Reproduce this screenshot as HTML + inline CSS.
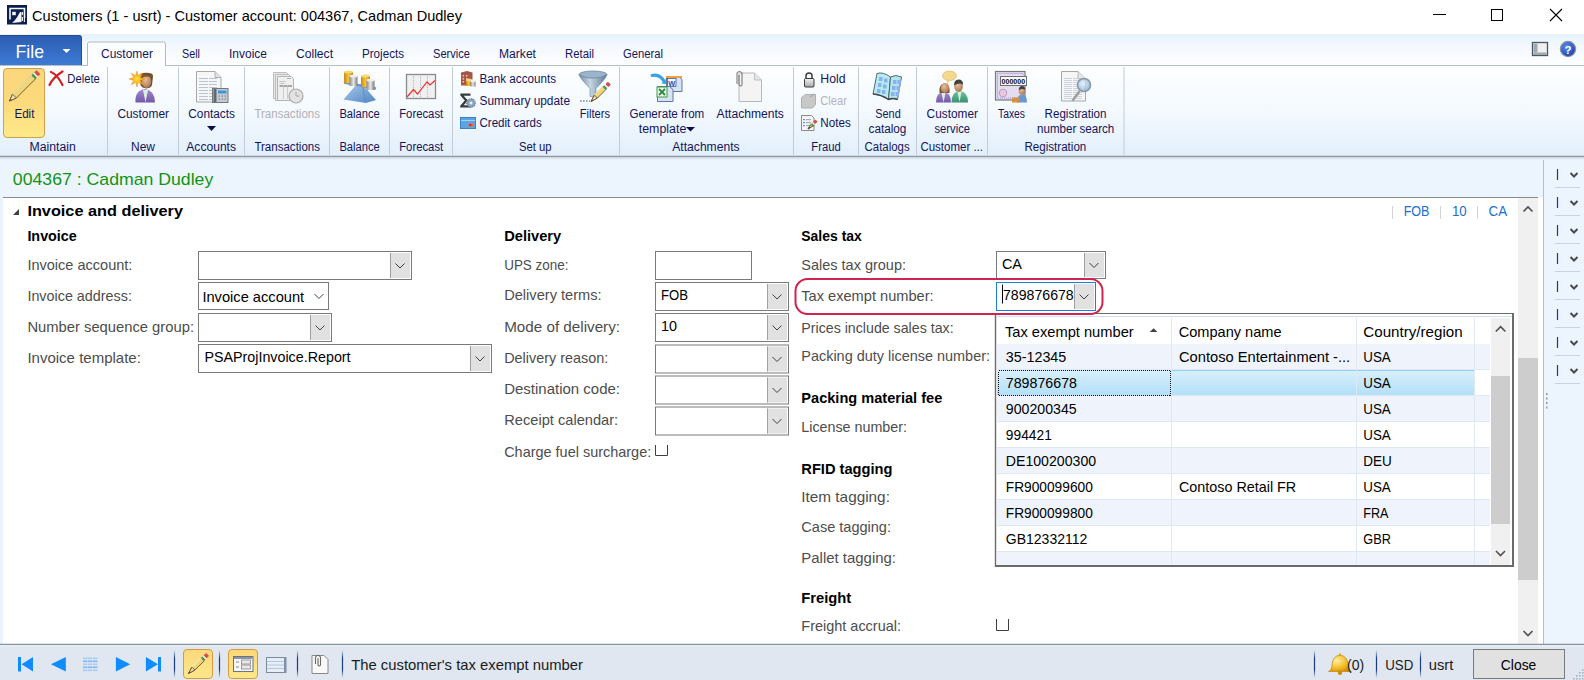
<!DOCTYPE html>
<html><head><meta charset="utf-8"><title>Customers</title>
<style>html,body{margin:0;padding:0;width:1584px;height:680px;overflow:hidden;background:#fff}
svg{display:block} text{font-family:"Liberation Sans",sans-serif}</style></head>
<body><svg width="1584" height="680" viewBox="0 0 1584 680">
<defs>
<linearGradient id="gRib" x1="0" y1="0" x2="0" y2="1">
 <stop offset="0" stop-color="#fdfeff"/><stop offset="0.5" stop-color="#f3f9fe"/><stop offset="1" stop-color="#e2effb"/>
</linearGradient>
<linearGradient id="gTabs" x1="0" y1="0" x2="0" y2="1">
 <stop offset="0" stop-color="#e7f2fc"/><stop offset="0.55" stop-color="#f7fbfe"/><stop offset="1" stop-color="#fcfdff"/>
</linearGradient>
<linearGradient id="gFile" x1="0" y1="0" x2="0" y2="1">
 <stop offset="0" stop-color="#2b5cae"/><stop offset="1" stop-color="#3d7bd6"/>
</linearGradient>
<linearGradient id="gEdit" x1="0" y1="0" x2="0" y2="1">
 <stop offset="0" stop-color="#fbd67e"/><stop offset="0.45" stop-color="#fcd97a"/><stop offset="1" stop-color="#fee98a"/>
</linearGradient>
<linearGradient id="gSel" x1="0" y1="0" x2="0" y2="1">
 <stop offset="0" stop-color="#d9effb"/><stop offset="1" stop-color="#b1dff8"/>
</linearGradient>
<linearGradient id="gBtnY" x1="0" y1="0" x2="0" y2="1">
 <stop offset="0" stop-color="#fcd87c"/><stop offset="1" stop-color="#fee78b"/>
</linearGradient>
<linearGradient id="gGold" x1="0" y1="0" x2="1" y2="0">
 <stop offset="0" stop-color="#c88a10"/><stop offset="0.5" stop-color="#f5c542"/><stop offset="1" stop-color="#b87a08"/>
</linearGradient>
<linearGradient id="gSilver" x1="0" y1="0" x2="1" y2="0">
 <stop offset="0" stop-color="#8a8a8a"/><stop offset="0.5" stop-color="#e6e6e6"/><stop offset="1" stop-color="#7a7a7a"/>
</linearGradient>
<linearGradient id="gBlueTri" x1="0" y1="0" x2="1" y2="1">
 <stop offset="0" stop-color="#a9c8ea"/><stop offset="1" stop-color="#4f86c4"/>
</linearGradient>
<linearGradient id="gFunnel" x1="0" y1="0" x2="1" y2="0">
 <stop offset="0" stop-color="#6f8ba6"/><stop offset="0.4" stop-color="#c8d6e4"/><stop offset="1" stop-color="#5a7894"/>
</linearGradient>
<linearGradient id="gLock" x1="0" y1="0" x2="0" y2="1">
 <stop offset="0" stop-color="#f4f4f4"/><stop offset="1" stop-color="#a8a8a8"/>
</linearGradient>
<linearGradient id="gPurple" x1="0" y1="0" x2="0" y2="1">
 <stop offset="0" stop-color="#a58ad0"/><stop offset="1" stop-color="#7258a8"/>
</linearGradient>
<linearGradient id="gGreenP" x1="0" y1="0" x2="0" y2="1">
 <stop offset="0" stop-color="#6fc4a0"/><stop offset="1" stop-color="#3a9070"/>
</linearGradient>
<radialGradient id="gFace" cx="0.4" cy="0.35" r="0.7">
 <stop offset="0" stop-color="#e8c09a"/><stop offset="1" stop-color="#a87450"/>
</radialGradient>
<radialGradient id="gStar" cx="0.5" cy="0.5" r="0.5">
 <stop offset="0" stop-color="#ffe040"/><stop offset="1" stop-color="#f09010"/>
</radialGradient>
<radialGradient id="gBell" cx="0.35" cy="0.35" r="0.8">
 <stop offset="0" stop-color="#fff0a0"/><stop offset="0.6" stop-color="#f2b820"/><stop offset="1" stop-color="#c07a08"/>
</radialGradient>
<radialGradient id="gHelp" cx="0.4" cy="0.35" r="0.7">
 <stop offset="0" stop-color="#5a8ef0"/><stop offset="1" stop-color="#1a3ea8"/>
</radialGradient>
<radialGradient id="gLens" cx="0.4" cy="0.4" r="0.6">
 <stop offset="0" stop-color="#e8f2fb"/><stop offset="1" stop-color="#8fb4d8"/>
</radialGradient>
<linearGradient id="gSep" x1="0" y1="0" x2="0" y2="1">
 <stop offset="0" stop-color="#1a3a7a" stop-opacity="0"/><stop offset="0.3" stop-color="#1a3a7a"/><stop offset="0.7" stop-color="#1a3a7a"/><stop offset="1" stop-color="#1a3a7a" stop-opacity="0"/>
</linearGradient>
<linearGradient id="gShadow" x1="0" y1="0" x2="0" y2="1">
 <stop offset="0" stop-color="#c9ced4"/><stop offset="1" stop-color="#ecf5fd" stop-opacity="0"/>
</linearGradient>
</defs>

<rect x="0" y="0" width="1584" height="34" fill="#ffffff" />
<rect x="7" y="5" width="20" height="19.5" fill="#0a1e50" />
<path d="M10 19.5V8.5h14.5V18" fill="none" stroke="#f4f6fa" stroke-width="1.6"/>
<rect x="12.2" y="11.8" width="3.6" height="3.4" fill="#f4f6fa" />
<path d="M11.5 17.5h2M12 23q4-3 8-11l1.5 0v10z" fill="#f4f6fa"/>
<path d="M22.4 12v3M22.4 17v4M24.4 18v4" stroke="#f4f6fa" stroke-width="1.1"/>
<text x="32" y="20.6" font-size="15" fill="#000" textLength="430" lengthAdjust="spacingAndGlyphs" >Customers (1 - usrt) - Customer account: 004367, Cadman Dudley</text>
<line x1="1433" y1="14.5" x2="1446" y2="14.5" stroke="#000" stroke-width="1" />
<rect x="1491.5" y="9.5" width="11" height="11" fill="none" stroke="#000" stroke-width="1" />
<path d="M1550 9L1562 21M1562 9L1550 21" stroke="#000" stroke-width="1.1"/>
<rect x="0" y="34" width="1584" height="31" fill="url(#gTabs)" />
<line x1="0" y1="65.5" x2="1584" y2="65.5" stroke="#b6bec8" stroke-width="1" />
<path d="M0 35h79a3 3 0 0 1 3 3v27h-82z" fill="url(#gFile)"/>
<path d="M0 35.5h78.5a3 3 0 0 1 3 3v26.5" fill="none" stroke="#2a4c8c" stroke-width="1"/>
<text x="15.5" y="58.2" font-size="19" fill="#ffffff" textLength="28.5" lengthAdjust="spacingAndGlyphs" >File</text>
<path d="M62.5 49h8l-4 4z" fill="#fff"/>
<path d="M87.5 66V44a2 2 0 0 1 2-2h74a2 2 0 0 1 2 2v22" fill="#fbfdff" stroke="#b0b9c4" stroke-width="1"/>
<rect x="88" y="64" width="77" height="4" fill="#fbfdff" />
<text x="101" y="58.0" font-size="12" fill="#14145a" textLength="52" lengthAdjust="spacingAndGlyphs" >Customer</text>
<text x="182" y="58.0" font-size="12" fill="#14145a" textLength="18" lengthAdjust="spacingAndGlyphs" >Sell</text>
<text x="229" y="58.0" font-size="12" fill="#14145a" textLength="38" lengthAdjust="spacingAndGlyphs" >Invoice</text>
<text x="296" y="58.0" font-size="12" fill="#14145a" textLength="37" lengthAdjust="spacingAndGlyphs" >Collect</text>
<text x="362" y="58.0" font-size="12" fill="#14145a" textLength="42" lengthAdjust="spacingAndGlyphs" >Projects</text>
<text x="433" y="58.0" font-size="12" fill="#14145a" textLength="37" lengthAdjust="spacingAndGlyphs" >Service</text>
<text x="499" y="58.0" font-size="12" fill="#14145a" textLength="37" lengthAdjust="spacingAndGlyphs" >Market</text>
<text x="565" y="58.0" font-size="12" fill="#14145a" textLength="29" lengthAdjust="spacingAndGlyphs" >Retail</text>
<text x="623" y="58.0" font-size="12" fill="#14145a" textLength="40" lengthAdjust="spacingAndGlyphs" >General</text>
<rect x="1532.5" y="42.5" width="15" height="13" fill="#efefef" stroke="#4a5660" stroke-width="1.3" />
<path d="M1533.5 43.5h4v9h-4z" fill="#a0a8b0"/><path d="M1533.5 52.5h13v2.5h-13z" fill="#a0a8b0"/>
<circle cx="1568" cy="49" r="7.6" fill="url(#gHelp)" stroke="#8a96a6" stroke-width="1.3"/>
<text x="1564.6" y="53.6" font-size="11.5" fill="#fff" font-weight="bold" textLength="7" lengthAdjust="spacingAndGlyphs" >?</text>
<rect x="0" y="66" width="1584" height="90" fill="url(#gRib)" />
<line x1="0" y1="156.5" x2="1584" y2="156.5" stroke="#8e9aa6" stroke-width="1.6" />
<line x1="107.5" y1="67" x2="107.5" y2="155" stroke="#c2cbd6" stroke-width="1"/>
<line x1="178.5" y1="67" x2="178.5" y2="155" stroke="#c2cbd6" stroke-width="1"/>
<line x1="244.5" y1="67" x2="244.5" y2="155" stroke="#c2cbd6" stroke-width="1"/>
<line x1="329.5" y1="67" x2="329.5" y2="155" stroke="#c2cbd6" stroke-width="1"/>
<line x1="389.5" y1="67" x2="389.5" y2="155" stroke="#c2cbd6" stroke-width="1"/>
<line x1="452.5" y1="67" x2="452.5" y2="155" stroke="#c2cbd6" stroke-width="1"/>
<line x1="619.5" y1="67" x2="619.5" y2="155" stroke="#c2cbd6" stroke-width="1"/>
<line x1="793.5" y1="67" x2="793.5" y2="155" stroke="#c2cbd6" stroke-width="1"/>
<line x1="858.5" y1="67" x2="858.5" y2="155" stroke="#c2cbd6" stroke-width="1"/>
<line x1="916.5" y1="67" x2="916.5" y2="155" stroke="#c2cbd6" stroke-width="1"/>
<line x1="987.5" y1="67" x2="987.5" y2="155" stroke="#c2cbd6" stroke-width="1"/>
<line x1="1124" y1="67" x2="1124" y2="155" stroke="#c2cbd6" stroke-width="1"/>
<rect x="3.5" y="68.5" width="41" height="69" fill="url(#gEdit)" stroke="#d2a24a" stroke-width="1" rx="3.5" />
<g transform="translate(9.5,101) rotate(-45)"><path d="M0 0L7 -2.75H34V2.75H7z" fill="#f1d475" stroke="#6a5a30" stroke-width="0.9"/><path d="M0 0L7 -2.75V2.75z" fill="#f4dcb8" stroke="#6a5a30" stroke-width="0.9"/><path d="M0 0l2.2 -0.7v1.4z" fill="#404040"/><rect x="34" y="-2.75" width="2" height="5.5" fill="#3a9a50"/><rect x="36" y="-2.75" width="1.5" height="5.5" fill="#f0f0f0"/><rect x="37.5" y="-2.75" width="3.5" height="5.5" fill="#d05050" rx="0.8"/><path d="M7 -2.75H34" stroke="#fff6c0" stroke-width="1"/></g>
<text x="14.4" y="117.8" font-size="12" fill="#14145a" textLength="20" lengthAdjust="spacingAndGlyphs" >Edit</text>
<path d="M49.5 85q3-7 13-13.5M51 72q6 2 11.5 13" fill="none" stroke="#d42020" stroke-width="2.2" stroke-linecap="round"/>
<text x="67.3" y="83" font-size="12" fill="#14145a" textLength="32.5" lengthAdjust="spacingAndGlyphs" >Delete</text>
<text x="29.5" y="150.6" font-size="12" fill="#14145a" textLength="46.3" lengthAdjust="spacingAndGlyphs" >Maintain</text>
<path d="M135.5 102.5q-1-12 9.5-13.5q10 1.5 10 13.5z" fill="url(#gPurple)"/>
<path d="M143 90l2.5 12.5 2.5-12.5z" fill="#d8f0dc"/>
<path d="M139 76q0-3 7-3.3q7 0 7 3.3l-1 9q-1 3-5.5 3.5q-4.5-0.5-6-3.5z" fill="#6a4a28"/>
<ellipse cx="146.5" cy="81.5" rx="4.8" ry="6.5" fill="url(#gFace)"/>
<path d="M141 75q5-3 11.5 0.5v2q-6-2-11.5 0z" fill="#7a5630"/>
<path d="M137.00 71.00 L138.38 75.67 L142.66 73.34 L140.33 77.62 L145.00 79.00 L140.33 80.38 L142.66 84.66 L138.38 82.33 L137.00 87.00 L135.62 82.33 L131.34 84.66 L133.67 80.38 L129.00 79.00 L133.67 77.62 L131.34 73.34 L135.62 75.67z" fill="url(#gStar)" stroke="#e89a18" stroke-width="0.5"/>
<text x="117.4" y="117.8" font-size="12" fill="#14145a" textLength="51.6" lengthAdjust="spacingAndGlyphs" >Customer</text>
<text x="131" y="150.6" font-size="12" fill="#14145a" textLength="24" lengthAdjust="spacingAndGlyphs" >New</text>
<path d="M196.5 71.5h18.5l6 6v24.5h-24.5z" fill="#f6f6f6" stroke="#a8a8a8"/>
<path d="M215 71.5v6h6" fill="#e0e0e0" stroke="#b0b0b0"/>
<line x1="199" y1="78.5" x2="208" y2="78.5" stroke="#b8c4d4" stroke-width="1" />
<line x1="209" y1="78.5" x2="217" y2="78.5" stroke="#b8c4d4" stroke-width="1" />
<line x1="199" y1="81.5" x2="208" y2="81.5" stroke="#b8c4d4" stroke-width="1" />
<line x1="209" y1="81.5" x2="217" y2="81.5" stroke="#b8c4d4" stroke-width="1" />
<line x1="199" y1="84.5" x2="208" y2="84.5" stroke="#b8c4d4" stroke-width="1" />
<line x1="209" y1="84.5" x2="217" y2="84.5" stroke="#b8c4d4" stroke-width="1" />
<line x1="199" y1="87.5" x2="208" y2="87.5" stroke="#b8c4d4" stroke-width="1" />
<line x1="209" y1="87.5" x2="217" y2="87.5" stroke="#b8c4d4" stroke-width="1" />
<line x1="199" y1="90.5" x2="208" y2="90.5" stroke="#b8c4d4" stroke-width="1" />
<line x1="209" y1="90.5" x2="217" y2="90.5" stroke="#b8c4d4" stroke-width="1" />
<line x1="199" y1="93.5" x2="208" y2="93.5" stroke="#b8c4d4" stroke-width="1" />
<line x1="209" y1="93.5" x2="217" y2="93.5" stroke="#b8c4d4" stroke-width="1" />
<line x1="199" y1="96.5" x2="208" y2="96.5" stroke="#b8c4d4" stroke-width="1" />
<line x1="209" y1="96.5" x2="217" y2="96.5" stroke="#b8c4d4" stroke-width="1" />
<line x1="199" y1="99.5" x2="208" y2="99.5" stroke="#b8c4d4" stroke-width="1" />
<line x1="209" y1="99.5" x2="217" y2="99.5" stroke="#b8c4d4" stroke-width="1" />
<rect x="212.5" y="88.5" width="15.5" height="14" fill="#c8ccd0" stroke="#707880" stroke-width="1" />
<rect x="213.5" y="89" width="3" height="13" fill="#606870" />
<rect x="218" y="90.5" width="8.5" height="3" fill="#3a98d8" />
<rect x="218.5" y="95.5" width="1.5" height="1.2" fill="#7a8898" />
<rect x="221.5" y="95.5" width="1.5" height="1.2" fill="#7a8898" />
<rect x="224.5" y="95.5" width="1.5" height="1.2" fill="#7a8898" />
<rect x="218.5" y="98.5" width="1.5" height="1.2" fill="#7a8898" />
<rect x="221.5" y="98.5" width="1.5" height="1.2" fill="#7a8898" />
<rect x="224.5" y="98.5" width="1.5" height="1.2" fill="#7a8898" />
<text x="188.3" y="117.8" font-size="12" fill="#14145a" textLength="46.7" lengthAdjust="spacingAndGlyphs" >Contacts</text>
<path d="M207 126h9l-4.5 5z" fill="#0c0c4a"/>
<text x="186.3" y="150.6" font-size="12" fill="#14145a" textLength="49.7" lengthAdjust="spacingAndGlyphs" >Accounts</text>
<path d="M273.5 72.5h13l2 2v24h-15z" fill="#e6e6e6" stroke="#bdbdbd"/>
<path d="M275.5 74.5h13l2 2v24h-15z" fill="#eaeaea" stroke="#bdbdbd"/>
<path d="M277.5 76.5h14l2 2v22h-16z" fill="#efefef" stroke="#b4b4b4"/>
<rect x="287" y="78" width="4" height="1" fill="#b0b0b0" />
<rect x="279.5" y="81" width="6" height="0.8" fill="#b8b8b8" />
<rect x="279.5" y="83" width="5" height="0.8" fill="#b8b8b8" />
<rect x="279.5" y="85" width="12.5" height="2" fill="#a8a8a8" />
<line x1="283.5" y1="85" x2="283.5" y2="99" stroke="#c4c4c4" stroke-width="0.8" />
<line x1="287.5" y1="85" x2="287.5" y2="99" stroke="#c4c4c4" stroke-width="0.8" />
<circle cx="296" cy="96" r="7" fill="#e2e2e2" stroke="#aaaaaa" stroke-width="1.2"/>
<path d="M296 91.5v4.5h3.5" fill="none" stroke="#a8a8a8" stroke-width="1"/>
<text x="254.4" y="117.5" font-size="12" fill="#b4b0b4" textLength="65.6" lengthAdjust="spacingAndGlyphs" >Transactions</text>
<text x="254.4" y="150.6" font-size="12" fill="#14145a" textLength="65.6" lengthAdjust="spacingAndGlyphs" >Transactions</text>
<path d="M343.5 99.5l13-15 6 0 13.5 15.5-10 3z" fill="url(#gBlueTri)"/>
<path d="M356.5 84.5l6 0 3 18.5" fill="none" stroke="#5a88bc" stroke-width="0.8"/>
<path d="M344 82.5l32 6" stroke="#6c9ad0" stroke-width="2.5"/>
<rect x="344" y="72" width="9" height="11" fill="url(#gGold)"/><ellipse cx="348.5" cy="72" rx="4.5" ry="1.6" fill="#f8d870"/>
<rect x="349.5" y="76" width="8" height="10" fill="url(#gSilver)"/><ellipse cx="353.5" cy="76" rx="4.0" ry="1.6" fill="#eeeeee"/>
<rect x="361" y="76" width="9" height="11" fill="url(#gGold)"/><ellipse cx="365.5" cy="76" rx="4.5" ry="1.6" fill="#f8d870"/>
<rect x="366.5" y="80" width="8" height="10" fill="url(#gSilver)"/><ellipse cx="370.5" cy="80" rx="4.0" ry="1.6" fill="#eeeeee"/>
<text x="339.4" y="117.5" font-size="12" fill="#14145a" textLength="40.4" lengthAdjust="spacingAndGlyphs" >Balance</text>
<text x="339.4" y="150.6" font-size="12" fill="#14145a" textLength="40.4" lengthAdjust="spacingAndGlyphs" >Balance</text>
<rect x="406.5" y="74.5" width="29" height="24" fill="#f0f0f0" stroke="#8a8a8a" stroke-width="1.3" />
<line x1="413.5" y1="76" x2="413.5" y2="97" stroke="#9aa0b0" stroke-width="0.8" stroke-dasharray="1 1.2"/>
<line x1="420.5" y1="76" x2="420.5" y2="97" stroke="#9aa0b0" stroke-width="0.8" stroke-dasharray="1 1.2"/>
<line x1="427.5" y1="76" x2="427.5" y2="97" stroke="#9aa0b0" stroke-width="0.8" stroke-dasharray="1 1.2"/>
<path d="M407 97l6.5-7.5 4 4.5 9.5-12 3 3 5-4.5" fill="none" stroke="#f03030" stroke-width="1.2"/>
<text x="399.2" y="117.5" font-size="12" fill="#14145a" textLength="44" lengthAdjust="spacingAndGlyphs" >Forecast</text>
<text x="399.2" y="150.6" font-size="12" fill="#14145a" textLength="44" lengthAdjust="spacingAndGlyphs" >Forecast</text>
<path d="M461 72.5l6-1.5 5.5 1.5v13h-11.5z" fill="#a8544a"/>
<rect x="462.5" y="75" width="1.6" height="1.6" fill="#e8c0b0" />
<rect x="466" y="75" width="1.6" height="1.6" fill="#e8c0b0" />
<rect x="462.5" y="78" width="1.6" height="1.6" fill="#e8c0b0" />
<rect x="466" y="78" width="1.6" height="1.6" fill="#e8c0b0" />
<rect x="462.5" y="81" width="1.6" height="1.6" fill="#e8c0b0" />
<rect x="466" y="81" width="1.6" height="1.6" fill="#e8c0b0" />
<rect x="466" y="80" width="6" height="6" fill="url(#gGold)"/><ellipse cx="469.0" cy="80" rx="3.0" ry="1.6" fill="#f8d870"/>
<rect x="470.5" y="81" width="5" height="5.5" fill="url(#gSilver)"/><ellipse cx="473.0" cy="81" rx="2.5" ry="1.6" fill="#eeeeee"/>
<text x="479.5" y="82.9" font-size="12" fill="#14145a" textLength="76.5" lengthAdjust="spacingAndGlyphs" >Bank accounts</text>
<path d="M460.5 93.5h10v2.3h-6.8l4.2 4.7-4.2 4.7h7v2.3h-10.5v-1.8l4.6-5.2-4.6-5.2z" fill="#3c3c3c"/>
<circle cx="471" cy="103" r="4.3" fill="#8ca4bc" stroke="#6a849c" stroke-width="1.2" stroke-dasharray="1.2 0.8"/><circle cx="471" cy="103" r="1.5" fill="#e8f0f8"/>
<text x="479.5" y="104.5" font-size="12" fill="#14145a" textLength="90.5" lengthAdjust="spacingAndGlyphs" >Summary update</text>
<rect x="460.5" y="117.5" width="15" height="11" fill="#5aa4e6" stroke="#3a84c6" stroke-width="1" />
<line x1="461" y1="120.5" x2="475" y2="120.5" stroke="#a8d0f4" stroke-width="1" />
<rect x="468.5" y="123.5" width="5" height="3" fill="#f07020" />
<rect x="469.5" y="124" width="2" height="2" fill="#e02020" />
<text x="479.5" y="127.1" font-size="12" fill="#14145a" textLength="62.3" lengthAdjust="spacingAndGlyphs" >Credit cards</text>
<ellipse cx="593" cy="74.5" rx="14" ry="3.5" fill="#9ab4cc" stroke="#708aa4" stroke-width="0.8"/>
<path d="M579 74.5q1 4 11 14v8l6 0v-8q10-10 11-14q-7 4-14 4t-14-4z" fill="url(#gFunnel)" stroke="#6a86a0" stroke-width="0.6"/>
<path d="M580 101h10" stroke="#8a8a8a" stroke-width="1.4" stroke-dasharray="1.6 1.4"/>
<g transform="translate(591,101.5) rotate(-45)"><path d="M0 0L7 -2.1H19V2.1H7z" fill="#f1d475" stroke="#6a5a30" stroke-width="0.9"/><path d="M0 0L7 -2.1V2.1z" fill="#f4dcb8" stroke="#6a5a30" stroke-width="0.9"/><path d="M0 0l2.2 -0.7v1.4z" fill="#404040"/><rect x="19" y="-2.1" width="2" height="4.2" fill="#3a9a50"/><rect x="21" y="-2.1" width="1.5" height="4.2" fill="#f0f0f0"/><rect x="22.5" y="-2.1" width="3.5" height="4.2" fill="#d05050" rx="0.8"/><path d="M7 -2.1H19" stroke="#fff6c0" stroke-width="1"/></g>
<text x="579.7" y="117.5" font-size="12" fill="#14145a" textLength="30.3" lengthAdjust="spacingAndGlyphs" >Filters</text>
<text x="519" y="150.6" font-size="12" fill="#14145a" textLength="32.6" lengthAdjust="spacingAndGlyphs" >Set up</text>
<path d="M666.5 76.5h12l3.5 3v12h-15.5z" fill="#d8e2f0" stroke="#5a78a8"/>
<rect x="666" y="76" width="16" height="2" fill="#f0a040" />
<rect x="667.5" y="78.5" width="8.5" height="8" fill="#f4f8fc" stroke="#3a5aa8" stroke-width="0.8" />
<text x="668.2" y="85.5" font-size="7.5" fill="#2a50b0" font-weight="bold" textLength="7" lengthAdjust="spacingAndGlyphs" >W</text>
<path d="M657.5 86.5h12l3.5 3v12h-15.5z" fill="#d8e2f0" stroke="#5a78a8"/>
<rect x="657" y="87" width="10" height="10" fill="#eef6ee" stroke="#3a9a4a" stroke-width="1" />
<path d="M659 89l6 6M665 89l-6 6" stroke="#2a8a3a" stroke-width="1.8"/>
<path d="M652 75.5q8-2 12.5 6.5" fill="none" stroke="#3aa2e4" stroke-width="3" stroke-linecap="round"/><path d="M661.5 83.5l4.5 0.5-0.5-5z" fill="#3aa2e4"/>
<text x="629.4" y="117.5" font-size="12" fill="#14145a" textLength="74.9" lengthAdjust="spacingAndGlyphs" >Generate from</text>
<text x="638.8" y="132.6" font-size="12" fill="#14145a" textLength="47.5" lengthAdjust="spacingAndGlyphs" >template</text>
<path d="M686 127h9l-4.5 4.5z" fill="#0c0c4a"/>
<path d="M739 73h15.5l7 7v21.5h-22.5z" fill="#f4f4f4" stroke="#b8b8b8"/>
<path d="M754.5 73v7h7" fill="#e4e4e4" stroke="#c0c0c0"/>
<path d="M737 84v-11q2.5-3 5 0v12q-1.5 2-3 0v-10" fill="none" stroke="#7a7a7a" stroke-width="1.1"/>
<text x="716.6" y="117.5" font-size="12" fill="#14145a" textLength="67.3" lengthAdjust="spacingAndGlyphs" >Attachments</text>
<text x="672.3" y="150.6" font-size="12" fill="#14145a" textLength="67.3" lengthAdjust="spacingAndGlyphs" >Attachments</text>
<path d="M806 79v-3q0-3 3-3t3 3v3" fill="none" stroke="#3a3a3a" stroke-width="1.5"/>
<rect x="804.5" y="78.5" width="9.5" height="8.5" fill="url(#gLock)" stroke="#3a3a3a" stroke-width="1" rx="1" />
<text x="820.3" y="82.9" font-size="12" fill="#14145a" textLength="25.2" lengthAdjust="spacingAndGlyphs" >Hold</text>
<path d="M801.5 97.5l4-3h10v10l-3 3.5h-11z" fill="#c8c8c8" stroke="#b0b0b0"/><path d="M810 97l4-3" stroke="#a8a8a8" stroke-width="1.5"/>
<text x="820.3" y="104.5" font-size="12" fill="#b8b4bc" textLength="26.7" lengthAdjust="spacingAndGlyphs" >Clear</text>
<path d="M801.5 115.5h10l2.5 2.5v12.5h-12.5z" fill="#f4f4f4" stroke="#8a8a8a"/>
<rect x="803" y="119" width="2" height="1.2" fill="#7090c0" />
<rect x="806" y="119" width="5" height="1.2" fill="#a0b0c8" />
<rect x="803" y="122" width="2" height="1.2" fill="#7090c0" />
<rect x="806" y="122" width="5" height="1.2" fill="#a0b0c8" />
<rect x="803" y="125" width="2" height="1.2" fill="#7090c0" />
<rect x="806" y="125" width="5" height="1.2" fill="#a0b0c8" />
<g transform="translate(808,129) rotate(-45)"><path d="M0 0L7 -1.6H5V1.6H7z" fill="#f1d475" stroke="#6a5a30" stroke-width="0.9"/><path d="M0 0L7 -1.6V1.6z" fill="#f4dcb8" stroke="#6a5a30" stroke-width="0.9"/><path d="M0 0l2.2 -0.7v1.4z" fill="#404040"/><rect x="5" y="-1.6" width="2" height="3.2" fill="#3a9a50"/><rect x="7" y="-1.6" width="1.5" height="3.2" fill="#f0f0f0"/><rect x="8.5" y="-1.6" width="3.5" height="3.2" fill="#d05050" rx="0.8"/><path d="M7 -1.6H5" stroke="#fff6c0" stroke-width="1"/></g>
<text x="820.3" y="127.1" font-size="12" fill="#14145a" textLength="30.5" lengthAdjust="spacingAndGlyphs" >Notes</text>
<text x="811.3" y="150.6" font-size="12" fill="#14145a" textLength="29.4" lengthAdjust="spacingAndGlyphs" >Fraud</text>
<path d="M873 94l4-20.5q6-2 13.5 3.5l-2 22.5q-7-5-15.5-5.5z" fill="#b4ecf2" stroke="#505860" stroke-width="0.9"/>
<path d="M890.5 77q5.5-3 11 0l-4 22.5q-4-2-9 0z" fill="#b0e6ee" stroke="#505860" stroke-width="0.9"/>
<rect x="879" y="77" width="3.5" height="4" fill="#8ab0f0" />
<rect x="884" y="78.5" width="3.5" height="4" fill="#8ab0f0" />
<rect x="878" y="83" width="3.5" height="4" fill="#8ab0f0" />
<rect x="883" y="84.5" width="3.5" height="4" fill="#8ab0f0" />
<rect x="877" y="89" width="3.5" height="4" fill="#8ab0f0" />
<rect x="882" y="90" width="3.5" height="4" fill="#8ab0f0" />
<rect x="893" y="80" width="3.5" height="4" fill="#8ab0f0" />
<rect x="897.5" y="80" width="3.5" height="4" fill="#8ab0f0" />
<rect x="892" y="86" width="3.5" height="4" fill="#8ab0f0" />
<rect x="896.5" y="86" width="3.5" height="4" fill="#8ab0f0" />
<rect x="891" y="92" width="3.5" height="4" fill="#8ab0f0" />
<rect x="895.5" y="92" width="3.5" height="4" fill="#8ab0f0" />
<path d="M873 94q8 0.5 15.5 5.5q4-2 9 0" fill="none" stroke="#404850" stroke-width="1.4"/>
<text x="875.3" y="117.5" font-size="12" fill="#14145a" textLength="25.4" lengthAdjust="spacingAndGlyphs" >Send</text>
<text x="868.5" y="132.6" font-size="12" fill="#14145a" textLength="37.9" lengthAdjust="spacingAndGlyphs" >catalog</text>
<text x="864.6" y="150.6" font-size="12" fill="#14145a" textLength="45" lengthAdjust="spacingAndGlyphs" >Catalogs</text>
<ellipse cx="949.5" cy="75.8" rx="7" ry="4.8" fill="#f4d890" stroke="#d8b060" stroke-width="0.6"/><path d="M946.5 79.5l1 4.5 3-4.5z" fill="#f0d080"/>
<path d="M936 102.5q0-10 7.5-10.5q7.5 0.5 7.5 10.5z" fill="url(#gPurple)"/>
<path d="M941.5 93l2 9.5 2-9.5z" fill="#d8f0dc"/>
<path d="M939.5 93q-1-9 5-9.5q6 0.5 5 9.5z" fill="#7a5430"/><ellipse cx="945" cy="88" rx="4.2" ry="5" fill="url(#gFace)"/>
<path d="M951.5 102.5q0-11 8-11.5q8.5 0.5 8.5 11.5z" fill="url(#gGreenP)"/>
<path d="M957.5 92l2 10 2-10z" fill="#d8f0dc"/>
<ellipse cx="958.5" cy="86.5" rx="4.3" ry="5.2" fill="url(#gFace)"/><path d="M954 85.5q0-6 4.5-6q4.8 0 4.6 5.5q-3-3-9.1 0.5z" fill="#404040"/>
<text x="926.6" y="117.5" font-size="12" fill="#14145a" textLength="51.4" lengthAdjust="spacingAndGlyphs" >Customer</text>
<text x="934.5" y="132.6" font-size="12" fill="#14145a" textLength="35.5" lengthAdjust="spacingAndGlyphs" >service</text>
<text x="920.4" y="150.6" font-size="12" fill="#14145a" textLength="62.6" lengthAdjust="spacingAndGlyphs" >Customer ...</text>
<rect x="995.5" y="71.5" width="29.5" height="28.5" fill="#e4dcf0" stroke="#7a7a7a" stroke-width="1.2" />
<rect x="997.5" y="73.5" width="25.5" height="24.5" fill="none" stroke="#9a90d0" stroke-width="1" stroke-dasharray="1 1"/>
<circle cx="1003" cy="93" r="3.8" fill="#e8c8e0" stroke="#b090b8" stroke-width="0.8"/>
<rect x="1000.5" y="76.5" width="26" height="9" fill="#fafafa" stroke="#707070" stroke-width="1" />
<text x="1001.6" y="84.1" font-size="8" fill="#101010" font-weight="bold" textLength="23.5" lengthAdjust="spacingAndGlyphs" >000000</text>
<path d="M1017 102.5q0-8 5-8t5 8z" fill="#6898d0"/><ellipse cx="1022" cy="91" rx="3.3" ry="3.8" fill="url(#gFace)"/><path d="M1018.8 90q0-4 3.2-4t3.2 4q-2-2-6.4 0z" fill="#404040"/>
<rect x="1012" y="97.5" width="7.5" height="5" fill="#d89040" />
<text x="998" y="117.5" font-size="12" fill="#14145a" textLength="27" lengthAdjust="spacingAndGlyphs" >Taxes</text>
<path d="M1061.5 71.5h16.5l7.5 7.5v22h-24z" fill="#f6f6f6" stroke="#a8a8a8"/>
<path d="M1078 71.5v7.5h7.5" fill="#e6e6e6" stroke="#b8b8b8"/>
<line x1="1064" y1="78.5" x2="1072" y2="78.5" stroke="#c0cad8" stroke-width="0.8" />
<line x1="1073" y1="78.5" x2="1082" y2="78.5" stroke="#c0cad8" stroke-width="0.8" />
<line x1="1064" y1="80.5" x2="1072" y2="80.5" stroke="#c0cad8" stroke-width="0.8" />
<line x1="1073" y1="80.5" x2="1082" y2="80.5" stroke="#c0cad8" stroke-width="0.8" />
<line x1="1064" y1="82.5" x2="1072" y2="82.5" stroke="#c0cad8" stroke-width="0.8" />
<line x1="1073" y1="82.5" x2="1082" y2="82.5" stroke="#c0cad8" stroke-width="0.8" />
<line x1="1064" y1="84.5" x2="1072" y2="84.5" stroke="#c0cad8" stroke-width="0.8" />
<line x1="1073" y1="84.5" x2="1082" y2="84.5" stroke="#c0cad8" stroke-width="0.8" />
<line x1="1064" y1="86.5" x2="1072" y2="86.5" stroke="#c0cad8" stroke-width="0.8" />
<line x1="1073" y1="86.5" x2="1082" y2="86.5" stroke="#c0cad8" stroke-width="0.8" />
<line x1="1064" y1="88.5" x2="1072" y2="88.5" stroke="#c0cad8" stroke-width="0.8" />
<line x1="1073" y1="88.5" x2="1082" y2="88.5" stroke="#c0cad8" stroke-width="0.8" />
<line x1="1064" y1="90.5" x2="1072" y2="90.5" stroke="#c0cad8" stroke-width="0.8" />
<line x1="1073" y1="90.5" x2="1082" y2="90.5" stroke="#c0cad8" stroke-width="0.8" />
<line x1="1064" y1="92.5" x2="1072" y2="92.5" stroke="#c0cad8" stroke-width="0.8" />
<line x1="1073" y1="92.5" x2="1082" y2="92.5" stroke="#c0cad8" stroke-width="0.8" />
<line x1="1064" y1="94.5" x2="1072" y2="94.5" stroke="#c0cad8" stroke-width="0.8" />
<line x1="1073" y1="94.5" x2="1082" y2="94.5" stroke="#c0cad8" stroke-width="0.8" />
<line x1="1064" y1="96.5" x2="1072" y2="96.5" stroke="#c0cad8" stroke-width="0.8" />
<line x1="1073" y1="96.5" x2="1082" y2="96.5" stroke="#c0cad8" stroke-width="0.8" />
<line x1="1064" y1="98.5" x2="1072" y2="98.5" stroke="#c0cad8" stroke-width="0.8" />
<line x1="1073" y1="98.5" x2="1082" y2="98.5" stroke="#c0cad8" stroke-width="0.8" />
<path d="M1073 100l6-8" stroke="#a0a0a0" stroke-width="2.6" stroke-linecap="round"/>
<circle cx="1084" cy="85" r="6.5" fill="url(#gLens)" fill-opacity="0.85" stroke="#8898a8" stroke-width="1.6"/>
<text x="1044.6" y="117.5" font-size="12" fill="#14145a" textLength="61.9" lengthAdjust="spacingAndGlyphs" >Registration</text>
<text x="1037" y="132.6" font-size="12" fill="#14145a" textLength="77.3" lengthAdjust="spacingAndGlyphs" >number search</text>
<text x="1024.4" y="150.6" font-size="12" fill="#14145a" textLength="61.9" lengthAdjust="spacingAndGlyphs" >Registration</text>
<rect x="0" y="157" width="1584" height="40" fill="#ecf5fd" />
<rect x="0" y="157" width="1584" height="4" fill="url(#gShadow)"/>
<text x="12.8" y="184.6" font-size="17" fill="#139313" textLength="200.5" lengthAdjust="spacingAndGlyphs" >004367 : Cadman Dudley</text>
<rect x="1543" y="161" width="41" height="484" fill="#ecf5fd" />
<line x1="1543.5" y1="160" x2="1543.5" y2="645" stroke="#a9c2dc" stroke-width="1" />
<line x1="1557.5" y1="169" x2="1557.5" y2="180" stroke="#1a3a8a" stroke-width="1.2" />
<path d="M1570.5 173l3.5 3.5 3.5-3.5" fill="none" stroke="#4a4a4a" stroke-width="2"/>
<line x1="1555" y1="187.5" x2="1580" y2="187.5" stroke="#c2d4e8" stroke-width="1" />
<line x1="1557.5" y1="197" x2="1557.5" y2="208" stroke="#1a3a8a" stroke-width="1.2" />
<path d="M1570.5 201l3.5 3.5 3.5-3.5" fill="none" stroke="#4a4a4a" stroke-width="2"/>
<line x1="1555" y1="215.5" x2="1580" y2="215.5" stroke="#c2d4e8" stroke-width="1" />
<line x1="1557.5" y1="225" x2="1557.5" y2="236" stroke="#1a3a8a" stroke-width="1.2" />
<path d="M1570.5 229l3.5 3.5 3.5-3.5" fill="none" stroke="#4a4a4a" stroke-width="2"/>
<line x1="1555" y1="243.5" x2="1580" y2="243.5" stroke="#c2d4e8" stroke-width="1" />
<line x1="1557.5" y1="253" x2="1557.5" y2="264" stroke="#1a3a8a" stroke-width="1.2" />
<path d="M1570.5 257l3.5 3.5 3.5-3.5" fill="none" stroke="#4a4a4a" stroke-width="2"/>
<line x1="1555" y1="271.5" x2="1580" y2="271.5" stroke="#c2d4e8" stroke-width="1" />
<line x1="1557.5" y1="281" x2="1557.5" y2="292" stroke="#1a3a8a" stroke-width="1.2" />
<path d="M1570.5 285l3.5 3.5 3.5-3.5" fill="none" stroke="#4a4a4a" stroke-width="2"/>
<line x1="1555" y1="299.5" x2="1580" y2="299.5" stroke="#c2d4e8" stroke-width="1" />
<line x1="1557.5" y1="309" x2="1557.5" y2="320" stroke="#1a3a8a" stroke-width="1.2" />
<path d="M1570.5 313l3.5 3.5 3.5-3.5" fill="none" stroke="#4a4a4a" stroke-width="2"/>
<line x1="1555" y1="327.5" x2="1580" y2="327.5" stroke="#c2d4e8" stroke-width="1" />
<line x1="1557.5" y1="337" x2="1557.5" y2="348" stroke="#1a3a8a" stroke-width="1.2" />
<path d="M1570.5 341l3.5 3.5 3.5-3.5" fill="none" stroke="#4a4a4a" stroke-width="2"/>
<line x1="1555" y1="355.5" x2="1580" y2="355.5" stroke="#c2d4e8" stroke-width="1" />
<line x1="1557.5" y1="365" x2="1557.5" y2="376" stroke="#1a3a8a" stroke-width="1.2" />
<path d="M1570.5 369l3.5 3.5 3.5-3.5" fill="none" stroke="#4a4a4a" stroke-width="2"/>
<line x1="1555" y1="383.5" x2="1580" y2="383.5" stroke="#c2d4e8" stroke-width="1" />
<rect x="1546" y="393" width="1.5" height="2" fill="#8a9aaa" />
<rect x="1546" y="397.5" width="1.5" height="2" fill="#8a9aaa" />
<rect x="1546" y="402" width="1.5" height="2" fill="#8a9aaa" />
<rect x="1546" y="406.5" width="1.5" height="2" fill="#8a9aaa" />
<rect x="3" y="197" width="1540" height="448" fill="#ffffff" />
<rect x="0" y="197" width="3" height="448" fill="#eaf3fc" />
<line x1="3" y1="197.5" x2="1538" y2="197.5" stroke="#8a8a8a" stroke-width="1" />
<rect x="1518" y="198" width="20" height="446" fill="#f0f0f0" />
<rect x="1518" y="358" width="20" height="222" fill="#cdcdcd" />
<path d="M1523.5 211.5l4.5-4.5 4.5 4.5" fill="none" stroke="#505050" stroke-width="1.6"/>
<path d="M1523.5 631l4.5 4.5 4.5-4.5" fill="none" stroke="#505050" stroke-width="1.6"/>
<path d="M13 215h6v-6z" fill="#404040"/>
<text x="27.4" y="215.7" font-size="15" fill="#000" font-weight="bold" textLength="155.6" lengthAdjust="spacingAndGlyphs" >Invoice and delivery</text>
<line x1="1392.5" y1="206" x2="1392.5" y2="219" stroke="#d4d4d4" stroke-width="1" />
<line x1="1440.5" y1="206" x2="1440.5" y2="219" stroke="#d4d4d4" stroke-width="1" />
<line x1="1477.5" y1="206" x2="1477.5" y2="219" stroke="#d4d4d4" stroke-width="1" />
<text x="1403.7" y="216.3" font-size="14" fill="#1a70d0" textLength="25.8" lengthAdjust="spacingAndGlyphs" >FOB</text>
<text x="1452" y="216.3" font-size="14" fill="#1a70d0" textLength="14.7" lengthAdjust="spacingAndGlyphs" >10</text>
<text x="1488.6" y="216.3" font-size="14" fill="#1a70d0" textLength="18.6" lengthAdjust="spacingAndGlyphs" >CA</text>
<text x="27.4" y="241" font-size="14" fill="#000" font-weight="bold" textLength="49.4" lengthAdjust="spacingAndGlyphs" >Invoice</text>
<text x="27.4" y="269.9" font-size="14.5" fill="#4d4d4d" textLength="105" lengthAdjust="spacingAndGlyphs" >Invoice account:</text>
<text x="27.4" y="300.5" font-size="14.5" fill="#4d4d4d" textLength="104.5" lengthAdjust="spacingAndGlyphs" >Invoice address:</text>
<text x="27.4" y="331.9" font-size="14.5" fill="#4d4d4d" textLength="166.6" lengthAdjust="spacingAndGlyphs" >Number sequence group:</text>
<text x="27.4" y="362.6" font-size="14.5" fill="#4d4d4d" textLength="113.5" lengthAdjust="spacingAndGlyphs" >Invoice template:</text>
<rect x="198.5" y="251.5" width="213" height="28" fill="#ffffff" stroke="#7a7a7a" stroke-width="1" />
<rect x="390" y="253" width="20" height="25" fill="#e1e1e1" />
<line x1="390.5" y1="253" x2="390.5" y2="278" stroke="#a0a0a0" stroke-width="1" />
<path d="M395.5 263.5l4.5 4.5 4.5-4.5" fill="none" stroke="#404040" stroke-width="1"/>
<rect x="198.5" y="282.5" width="130" height="27" fill="#ffffff" stroke="#7a7a7a" stroke-width="1" />
<path d="M314.5 294.0l4.5 4.5 4.5-4.5" fill="none" stroke="#404040" stroke-width="1"/>
<text x="202.4" y="301.8" font-size="14.5" fill="#000" textLength="101.8" lengthAdjust="spacingAndGlyphs" >Invoice account</text>
<rect x="198.5" y="313.5" width="133" height="28" fill="#ffffff" stroke="#7a7a7a" stroke-width="1" />
<rect x="310" y="315" width="20" height="25" fill="#e1e1e1" />
<line x1="310.5" y1="315" x2="310.5" y2="340" stroke="#a0a0a0" stroke-width="1" />
<path d="M315.5 325.5l4.5 4.5 4.5-4.5" fill="none" stroke="#404040" stroke-width="1"/>
<rect x="198.5" y="344.5" width="293" height="28" fill="#ffffff" stroke="#7a7a7a" stroke-width="1" />
<rect x="470" y="346" width="20" height="25" fill="#e1e1e1" />
<line x1="470.5" y1="346" x2="470.5" y2="371" stroke="#a0a0a0" stroke-width="1" />
<path d="M475.5 356.5l4.5 4.5 4.5-4.5" fill="none" stroke="#404040" stroke-width="1"/>
<text x="204.4" y="361.9" font-size="14.5" fill="#000" textLength="146.2" lengthAdjust="spacingAndGlyphs" >PSAProjInvoice.Report</text>
<text x="504.2" y="240.9" font-size="14" fill="#000" font-weight="bold" textLength="57" lengthAdjust="spacingAndGlyphs" >Delivery</text>
<text x="504.2" y="269.6" font-size="14.5" fill="#4d4d4d" textLength="64.3" lengthAdjust="spacingAndGlyphs" >UPS zone:</text>
<text x="504.2" y="300.3" font-size="14.5" fill="#4d4d4d" textLength="97.4" lengthAdjust="spacingAndGlyphs" >Delivery terms:</text>
<text x="504.2" y="331.5" font-size="14.5" fill="#4d4d4d" textLength="115.8" lengthAdjust="spacingAndGlyphs" >Mode of delivery:</text>
<text x="504.2" y="362.6" font-size="14.5" fill="#4d4d4d" textLength="104" lengthAdjust="spacingAndGlyphs" >Delivery reason:</text>
<text x="504.2" y="393.7" font-size="14.5" fill="#4d4d4d" textLength="115.8" lengthAdjust="spacingAndGlyphs" >Destination code:</text>
<text x="504.2" y="424.8" font-size="14.5" fill="#4d4d4d" textLength="114" lengthAdjust="spacingAndGlyphs" >Receipt calendar:</text>
<text x="504.2" y="457" font-size="14.5" fill="#4d4d4d" textLength="147" lengthAdjust="spacingAndGlyphs" >Charge fuel surcharge:</text>
<rect x="655.5" y="251.5" width="96" height="28" fill="#fff" stroke="#7a7a7a" stroke-width="1" />
<rect x="655.5" y="282.5" width="133" height="28" fill="#ffffff" stroke="#7a7a7a" stroke-width="1" />
<rect x="767" y="284" width="20" height="25" fill="#e1e1e1" />
<line x1="767.5" y1="284" x2="767.5" y2="309" stroke="#a0a0a0" stroke-width="1" />
<path d="M772.5 294.5l4.5 4.5 4.5-4.5" fill="none" stroke="#404040" stroke-width="1"/>
<text x="661" y="299.7" font-size="14.5" fill="#000" textLength="27" lengthAdjust="spacingAndGlyphs" >FOB</text>
<rect x="655.5" y="313.5" width="133" height="28" fill="#ffffff" stroke="#7a7a7a" stroke-width="1" />
<rect x="767" y="315" width="20" height="25" fill="#e1e1e1" />
<line x1="767.5" y1="315" x2="767.5" y2="340" stroke="#a0a0a0" stroke-width="1" />
<path d="M772.5 325.5l4.5 4.5 4.5-4.5" fill="none" stroke="#404040" stroke-width="1"/>
<text x="661" y="331" font-size="14.5" fill="#000" textLength="16" lengthAdjust="spacingAndGlyphs" >10</text>
<rect x="655.5" y="345.0" width="133" height="28" fill="#ffffff" stroke="#7a7a7a" stroke-width="1" />
<rect x="767" y="346.5" width="20" height="25" fill="#e1e1e1" />
<line x1="767.5" y1="346.5" x2="767.5" y2="371.5" stroke="#a0a0a0" stroke-width="1" />
<path d="M772.5 357.0l4.5 4.5 4.5-4.5" fill="none" stroke="#404040" stroke-width="1"/>
<rect x="655.5" y="376.0" width="133" height="28" fill="#ffffff" stroke="#7a7a7a" stroke-width="1" />
<rect x="767" y="377.5" width="20" height="25" fill="#e1e1e1" />
<line x1="767.5" y1="377.5" x2="767.5" y2="402.5" stroke="#a0a0a0" stroke-width="1" />
<path d="M772.5 388.0l4.5 4.5 4.5-4.5" fill="none" stroke="#404040" stroke-width="1"/>
<rect x="655.5" y="407.0" width="133" height="28" fill="#ffffff" stroke="#7a7a7a" stroke-width="1" />
<rect x="767" y="408.5" width="20" height="25" fill="#e1e1e1" />
<line x1="767.5" y1="408.5" x2="767.5" y2="433.5" stroke="#a0a0a0" stroke-width="1" />
<path d="M772.5 419.0l4.5 4.5 4.5-4.5" fill="none" stroke="#404040" stroke-width="1"/>
<path d="M655.5 445v10.5h12v-10.5" fill="none" stroke="#404040" stroke-width="1"/>
<text x="801.3" y="241.1" font-size="14" fill="#000" font-weight="bold" textLength="60.5" lengthAdjust="spacingAndGlyphs" >Sales tax</text>
<text x="801.3" y="269.9" font-size="14.5" fill="#4d4d4d" textLength="104.7" lengthAdjust="spacingAndGlyphs" >Sales tax group:</text>
<text x="801.3" y="300.5" font-size="14.5" fill="#4d4d4d" textLength="132.3" lengthAdjust="spacingAndGlyphs" >Tax exempt number:</text>
<text x="801.3" y="332.5" font-size="14.5" fill="#4d4d4d" textLength="152.3" lengthAdjust="spacingAndGlyphs" >Prices include sales tax:</text>
<text x="801.3" y="361.2" font-size="14.5" fill="#4d4d4d" textLength="188.7" lengthAdjust="spacingAndGlyphs" >Packing duty license number:</text>
<text x="801.3" y="431.6" font-size="14.5" fill="#4d4d4d" textLength="105.7" lengthAdjust="spacingAndGlyphs" >License number:</text>
<text x="801.3" y="502.4" font-size="14.5" fill="#4d4d4d" textLength="88.6" lengthAdjust="spacingAndGlyphs" >Item tagging:</text>
<text x="801.3" y="532.3" font-size="14.5" fill="#4d4d4d" textLength="89.7" lengthAdjust="spacingAndGlyphs" >Case tagging:</text>
<text x="801.3" y="562.9" font-size="14.5" fill="#4d4d4d" textLength="94.7" lengthAdjust="spacingAndGlyphs" >Pallet tagging:</text>
<text x="801.3" y="631.3" font-size="14.5" fill="#4d4d4d" textLength="99.7" lengthAdjust="spacingAndGlyphs" >Freight accrual:</text>
<text x="801.3" y="402.8" font-size="14" fill="#000" font-weight="bold" textLength="141" lengthAdjust="spacingAndGlyphs" >Packing material fee</text>
<text x="801.3" y="473.6" font-size="14" fill="#000" font-weight="bold" textLength="91.2" lengthAdjust="spacingAndGlyphs" >RFID tagging</text>
<text x="801.3" y="602.5" font-size="14" fill="#000" font-weight="bold" textLength="50" lengthAdjust="spacingAndGlyphs" >Freight</text>
<rect x="996.5" y="251.5" width="109" height="27" fill="#ffffff" stroke="#7a7a7a" stroke-width="1" />
<rect x="1084" y="253" width="20" height="24" fill="#e1e1e1" />
<line x1="1084.5" y1="253" x2="1084.5" y2="277" stroke="#a0a0a0" stroke-width="1" />
<path d="M1089.5 263.0l4.5 4.5 4.5-4.5" fill="none" stroke="#404040" stroke-width="1"/>
<text x="1001.9" y="268.7" font-size="14.5" fill="#000" textLength="20" lengthAdjust="spacingAndGlyphs" >CA</text>
<rect x="996.5" y="282.5" width="99" height="28" fill="#ffffff" stroke="#1e7be0" stroke-width="1" />
<rect x="1074" y="284" width="20" height="25" fill="#e1e1e1" />
<line x1="1074.5" y1="284" x2="1074.5" y2="309" stroke="#a0a0a0" stroke-width="1" />
<path d="M1079.5 294.5l4.5 4.5 4.5-4.5" fill="none" stroke="#404040" stroke-width="1"/>
<text x="1003" y="299.6" font-size="14.5" fill="#000" textLength="70.7" lengthAdjust="spacingAndGlyphs" >789876678</text>
<line x1="1002.5" y1="284.5" x2="1002.5" y2="303.5" stroke="#000" stroke-width="1" />
<path d="M996.5 619v11.5h12v-11.5" fill="none" stroke="#404040" stroke-width="1"/>
<rect x="995" y="313" width="519" height="254" fill="#ffffff" />
<line x1="997" y1="316.5" x2="1512" y2="316.5" stroke="#cfe0f0" stroke-width="1" />
<text x="1004.9" y="336.8" font-size="14.5" fill="#000" textLength="128.8" lengthAdjust="spacingAndGlyphs" >Tax exempt number</text>
<path d="M1149.8 332h7.6l-3.8-3.8z" fill="#404040"/>
<text x="1178.75" y="336.8" font-size="14.5" fill="#000" textLength="102.75" lengthAdjust="spacingAndGlyphs" >Company name</text>
<text x="1363.3" y="336.8" font-size="14.5" fill="#000" textLength="99.3" lengthAdjust="spacingAndGlyphs" >Country/region</text>
<rect x="997" y="344" width="493" height="26" fill="#eff4fc" />
<line x1="997" y1="369.5" x2="1490" y2="369.5" stroke="#dfe8f4" stroke-width="1" />
<text x="1005.8" y="362" font-size="14.5" fill="#000" textLength="60.5" lengthAdjust="spacingAndGlyphs" >35-12345</text>
<text x="1179" y="362" font-size="14.5" fill="#000" textLength="171.2" lengthAdjust="spacingAndGlyphs" >Contoso Entertainment -...</text>
<text x="1363.3" y="362" font-size="14.5" fill="#000" textLength="27.5" lengthAdjust="spacingAndGlyphs" >USA</text>
<rect x="997" y="370" width="477.5" height="26" fill="url(#gSel)" />
<line x1="1172" y1="370.5" x2="1474" y2="370.5" stroke="#8fd0f5" stroke-width="1" />
<line x1="997" y1="395.5" x2="1490" y2="395.5" stroke="#dfe8f4" stroke-width="1" />
<text x="1005.8" y="388" font-size="14.5" fill="#000" textLength="71.2" lengthAdjust="spacingAndGlyphs" >789876678</text>
<text x="1363.3" y="388" font-size="14.5" fill="#000" textLength="27.5" lengthAdjust="spacingAndGlyphs" >USA</text>
<rect x="997" y="396" width="493" height="26" fill="#eff4fc" />
<line x1="997" y1="421.5" x2="1490" y2="421.5" stroke="#dfe8f4" stroke-width="1" />
<text x="1005.8" y="414" font-size="14.5" fill="#000" textLength="70.9" lengthAdjust="spacingAndGlyphs" >900200345</text>
<text x="1363.3" y="414" font-size="14.5" fill="#000" textLength="27.5" lengthAdjust="spacingAndGlyphs" >USA</text>
<rect x="997" y="422" width="493" height="26" fill="#ffffff" />
<line x1="997" y1="447.5" x2="1490" y2="447.5" stroke="#dfe8f4" stroke-width="1" />
<text x="1005.8" y="440" font-size="14.5" fill="#000" textLength="46" lengthAdjust="spacingAndGlyphs" >994421</text>
<text x="1363.3" y="440" font-size="14.5" fill="#000" textLength="27.5" lengthAdjust="spacingAndGlyphs" >USA</text>
<rect x="997" y="448" width="493" height="26" fill="#eff4fc" />
<line x1="997" y1="473.5" x2="1490" y2="473.5" stroke="#dfe8f4" stroke-width="1" />
<text x="1005.8" y="466" font-size="14.5" fill="#000" textLength="90.3" lengthAdjust="spacingAndGlyphs" >DE100200300</text>
<text x="1363.3" y="466" font-size="14.5" fill="#000" textLength="28.5" lengthAdjust="spacingAndGlyphs" >DEU</text>
<rect x="997" y="474" width="493" height="26" fill="#ffffff" />
<line x1="997" y1="499.5" x2="1490" y2="499.5" stroke="#dfe8f4" stroke-width="1" />
<text x="1005.8" y="492" font-size="14.5" fill="#000" textLength="87" lengthAdjust="spacingAndGlyphs" >FR900099600</text>
<text x="1179" y="492" font-size="14.5" fill="#000" textLength="117.2" lengthAdjust="spacingAndGlyphs" >Contoso Retail FR</text>
<text x="1363.3" y="492" font-size="14.5" fill="#000" textLength="27.5" lengthAdjust="spacingAndGlyphs" >USA</text>
<rect x="997" y="500" width="493" height="26" fill="#eff4fc" />
<line x1="997" y1="525.5" x2="1490" y2="525.5" stroke="#dfe8f4" stroke-width="1" />
<text x="1005.8" y="518" font-size="14.5" fill="#000" textLength="87" lengthAdjust="spacingAndGlyphs" >FR900099800</text>
<text x="1363.3" y="518" font-size="14.5" fill="#000" textLength="25.2" lengthAdjust="spacingAndGlyphs" >FRA</text>
<rect x="997" y="526" width="493" height="26" fill="#ffffff" />
<line x1="997" y1="551.5" x2="1490" y2="551.5" stroke="#dfe8f4" stroke-width="1" />
<text x="1005.8" y="544" font-size="14.5" fill="#000" textLength="81.5" lengthAdjust="spacingAndGlyphs" >GB12332112</text>
<text x="1363.3" y="544" font-size="14.5" fill="#000" textLength="27.5" lengthAdjust="spacingAndGlyphs" >GBR</text>
<rect x="997" y="552" width="493" height="13" fill="#eff4fc" />
<line x1="1171.5" y1="318" x2="1171.5" y2="564" stroke="#dfe7f2" stroke-width="1" />
<line x1="1356.5" y1="318" x2="1356.5" y2="564" stroke="#dfe7f2" stroke-width="1" />
<line x1="1474.5" y1="318" x2="1474.5" y2="564" stroke="#dfe7f2" stroke-width="1" />
<rect x="998.5" y="370.5" width="172" height="25" fill="none" stroke="#101010" stroke-width="1" stroke-dasharray="1 1" shape-rendering="crispEdges"/>
<rect x="1491" y="318" width="19" height="247" fill="#f0f0f0" />
<rect x="1491" y="376" width="19" height="148" fill="#cdcdcd" />
<path d="M1495.8 331.5l4.8-4.8 4.8 4.8" fill="none" stroke="#505050" stroke-width="1.6"/>
<path d="M1496 551l4.5 4.5 4.5-4.5" fill="none" stroke="#505050" stroke-width="1.6"/>
<line x1="995.5" y1="313" x2="995.5" y2="567" stroke="#6a6a6a" stroke-width="1.4" />
<line x1="995" y1="313.5" x2="1514" y2="313.5" stroke="#6a6a6a" stroke-width="1" />
<line x1="1513" y1="313" x2="1513" y2="567" stroke="#6a6a6a" stroke-width="2" />
<line x1="995" y1="566" x2="1514" y2="566" stroke="#6a6a6a" stroke-width="2" />
<rect x="795.5" y="279" width="307" height="35" rx="12" ry="12" fill="none" stroke="#cf2450" stroke-width="2"/>
<rect x="0" y="645" width="1584" height="35" fill="#e0e7f0" />
<line x1="0" y1="644.5" x2="1584" y2="644.5" stroke="#8894a2" stroke-width="1.5" />
<line x1="0" y1="645.8" x2="1584" y2="645.8" stroke="#f4f7fb" stroke-width="1" />
<path d="M18 657h3v14.5h-3z M33 657v14.5l-11.5-7.25z" fill="#0f8cff"/>
<path d="M65.8 657v14.5l-14.9-7.25z" fill="#0f8cff"/>
<rect x="83" y="657.5" width="4.5" height="1.6" fill="#a8cdf4" />
<rect x="83" y="660.5" width="4.5" height="1.6" fill="#7fb6f0" />
<rect x="83" y="663.5" width="4.5" height="1.6" fill="#a8cdf4" />
<rect x="83" y="666.5" width="4.5" height="1.6" fill="#7fb6f0" />
<rect x="83" y="669.5" width="4.5" height="1.6" fill="#a8cdf4" />
<rect x="88" y="657.5" width="4.5" height="1.6" fill="#a8cdf4" />
<rect x="88" y="660.5" width="4.5" height="1.6" fill="#7fb6f0" />
<rect x="88" y="663.5" width="4.5" height="1.6" fill="#a8cdf4" />
<rect x="88" y="666.5" width="4.5" height="1.6" fill="#7fb6f0" />
<rect x="88" y="669.5" width="4.5" height="1.6" fill="#a8cdf4" />
<rect x="93" y="657.5" width="4.5" height="1.6" fill="#a8cdf4" />
<rect x="93" y="660.5" width="4.5" height="1.6" fill="#7fb6f0" />
<rect x="93" y="663.5" width="4.5" height="1.6" fill="#a8cdf4" />
<rect x="93" y="666.5" width="4.5" height="1.6" fill="#7fb6f0" />
<rect x="93" y="669.5" width="4.5" height="1.6" fill="#a8cdf4" />
<path d="M115.9 657v14.5l14.3-7.25z" fill="#0f8cff"/>
<path d="M145.9 657v14.5l12-7.25z M158 657h3v14.5h-3z" fill="#0f8cff"/>
<rect x="173.9" y="650" width="1.2" height="28" fill="url(#gSep)" />
<rect x="218.9" y="650" width="1.2" height="28" fill="url(#gSep)" />
<rect x="296.9" y="650" width="1.2" height="28" fill="url(#gSep)" />
<rect x="341.9" y="650" width="1.2" height="28" fill="url(#gSep)" />
<rect x="183.5" y="649.5" width="29" height="29" fill="url(#gBtnY)" stroke="#d69c3c" stroke-width="1" rx="3.5" />
<g transform="translate(188.5,673.5) rotate(-45)"><path d="M0 0L7 -2.1H20V2.1H7z" fill="#f1d475" stroke="#6a5a30" stroke-width="0.9"/><path d="M0 0L7 -2.1V2.1z" fill="#f4dcb8" stroke="#6a5a30" stroke-width="0.9"/><path d="M0 0l2.2 -0.7v1.4z" fill="#404040"/><rect x="20" y="-2.1" width="2" height="4.2" fill="#3a9a50"/><rect x="22" y="-2.1" width="1.5" height="4.2" fill="#f0f0f0"/><rect x="23.5" y="-2.1" width="3.5" height="4.2" fill="#d05050" rx="0.8"/><path d="M7 -2.1H20" stroke="#fff6c0" stroke-width="1"/></g>
<rect x="228.5" y="649.5" width="29" height="29" fill="url(#gBtnY)" stroke="#d69c3c" stroke-width="1" rx="3.5" />
<rect x="233.5" y="656.5" width="19.5" height="15" fill="#f6f6f6" stroke="#6a7480" stroke-width="1" />
<rect x="234" y="657" width="18.5" height="2" fill="#8a96a4" />
<line x1="236" y1="662.0" x2="239" y2="662.0" stroke="#8a8a8a" stroke-width="1" />
<rect x="241.5" y="660.0" width="9" height="4" fill="#e8e8e8" stroke="#8a8a8a" stroke-width="0.8" />
<line x1="236" y1="667.0" x2="239" y2="667.0" stroke="#8a8a8a" stroke-width="1" />
<rect x="241.5" y="665.0" width="9" height="4" fill="#e8e8e8" stroke="#8a8a8a" stroke-width="0.8" />
<rect x="266.5" y="657.5" width="19.5" height="15" fill="#e6edf6" stroke="#7a8aa0" stroke-width="1" />
<line x1="267" y1="661.5" x2="285.5" y2="661.5" stroke="#b8c8dc" stroke-width="1" />
<line x1="267" y1="665.0" x2="285.5" y2="665.0" stroke="#b8c8dc" stroke-width="1" />
<line x1="267" y1="668.5" x2="285.5" y2="668.5" stroke="#b8c8dc" stroke-width="1" />
<rect x="284" y="657.5" width="2" height="15" fill="#8090a8" />
<path d="M312 655.5h12l4 4v14h-16z" fill="#f8f8f8" stroke="#8a8a8a"/>
<path d="M315.5 664v-7q2.5-3.5 5 0v8q-1.2 2-2.5 0v-7" fill="none" stroke="#6a6a6a" stroke-width="1.1"/>
<text x="351.2" y="669.9" font-size="15" fill="#1a1a1a" textLength="231.8" lengthAdjust="spacingAndGlyphs" >The customer&#x27;s tax exempt number</text>
<rect x="1313.9" y="650" width="1.2" height="28" fill="url(#gSep)" />
<rect x="1375.9" y="650" width="1.2" height="28" fill="url(#gSep)" />
<rect x="1419.9" y="650" width="1.2" height="28" fill="url(#gSep)" />
<path d="M1328.5 671.5q3-1 3.5-6.5q0.5-9 8-10q7.5 1 8 10q0.5 5.5 3.5 6.5z" fill="url(#gBell)" stroke="#c8860c" stroke-width="0.7"/>
<circle cx="1340" cy="672.8" r="2.2" fill="#d08a10"/><rect x="1339" y="653.5" width="2" height="2" fill="#d8a020"/>
<text x="1347" y="669.6" font-size="15" fill="#1a1a1a" textLength="17.2" lengthAdjust="spacingAndGlyphs" >(0)</text>
<text x="1385.2" y="669.6" font-size="15" fill="#1a1a1a" textLength="28.1" lengthAdjust="spacingAndGlyphs" >USD</text>
<text x="1428.7" y="669.6" font-size="15" fill="#1a1a1a" textLength="24.6" lengthAdjust="spacingAndGlyphs" >usrt</text>
<rect x="1473.5" y="649.5" width="91" height="29" fill="#e1e1e1" stroke="#7a7a7a" stroke-width="1" />
<text x="1500.8" y="669.6" font-size="15" fill="#000" textLength="35.5" lengthAdjust="spacingAndGlyphs" >Close</text>
<rect x="1582" y="678" width="1.6" height="1.6" fill="#a8b4c4" />
<rect x="1582" y="675" width="1.6" height="1.6" fill="#a8b4c4" />
<rect x="1579" y="678" width="1.6" height="1.6" fill="#a8b4c4" />
<rect x="1582" y="672" width="1.6" height="1.6" fill="#a8b4c4" />
<rect x="1579" y="675" width="1.6" height="1.6" fill="#a8b4c4" />
<rect x="1576" y="678" width="1.6" height="1.6" fill="#a8b4c4" />
<rect x="1582" y="669" width="1.6" height="1.6" fill="#a8b4c4" />
<rect x="1579" y="672" width="1.6" height="1.6" fill="#a8b4c4" />
<rect x="1576" y="675" width="1.6" height="1.6" fill="#a8b4c4" />
<rect x="1573" y="678" width="1.6" height="1.6" fill="#a8b4c4" />
</svg></body></html>
